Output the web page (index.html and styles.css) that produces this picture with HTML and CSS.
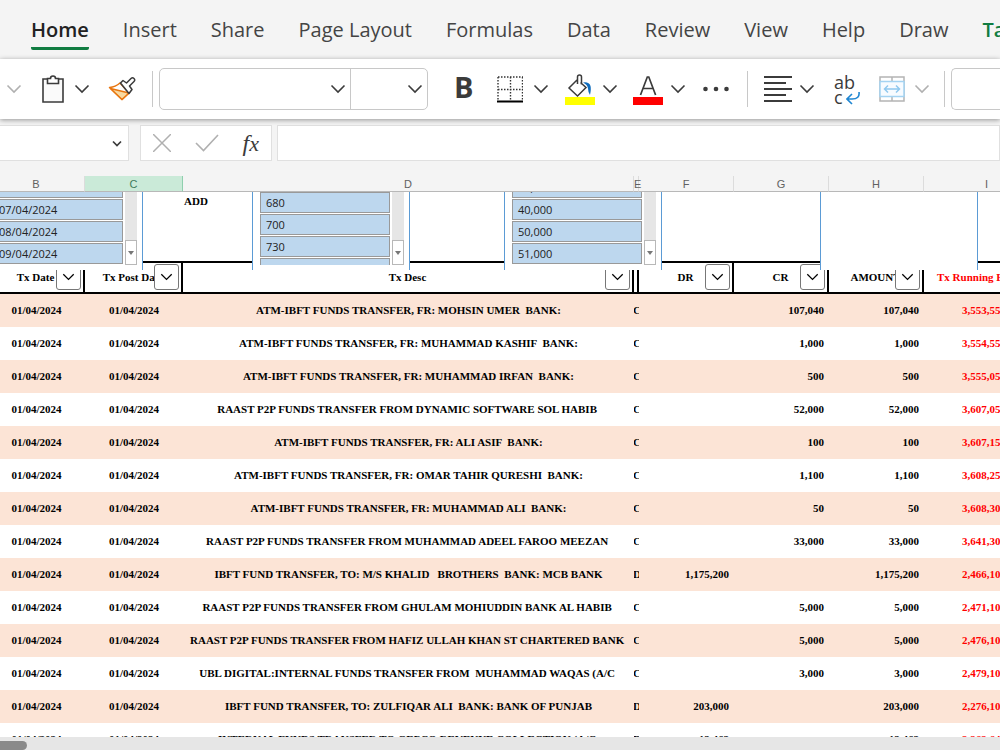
FILE: index.html
```html
<!DOCTYPE html>
<html lang="en">
<head>
    <meta charset="UTF-8">
    <meta name="viewport" content="width=device-width, initial-scale=1.0">
    <title>Bank Statement</title>
    <link rel="stylesheet" href="styles.css">
</head>
<body>
    <svg class="defs" aria-hidden="true">
        <symbol id="chevron" viewBox="0 0 16 10"><path d="M1.5 1.5 8 8l6.500-6.500" fill="none" stroke="currentColor" stroke-width="1.600"/></symbol>
        <symbol id="chevron-small" viewBox="0 0 10 7"><path d="M1 1.500 5 5.500l4-4" fill="none" stroke="currentColor" stroke-width="1.700"/></symbol>
    </svg>

    <nav class="tabs">
        <a href="#" class="active">Home</a>
        <a href="#">Insert</a>
        <a href="#">Share</a>
        <a href="#">Page Layout</a>
        <a href="#">Formulas</a>
        <a href="#">Data</a>
        <a href="#">Review</a>
        <a href="#">View</a>
        <a href="#">Help</a>
        <a href="#">Draw</a>
        <a href="#" class="context">Table</a>
    </nav>

    <div class="toolbar">
        <button class="arrow off" aria-label="Undo options"><svg><use href="#chevron"/></svg></button>
        <button class="paste" aria-label="Paste">
            <svg width="24" height="28" viewBox="0 0 24 28" fill="none" stroke="#3b3b3b" stroke-width="1.6"><path d="M2 4h20v23H2z" fill="#fafafa"/><path d="M6.500 8.500v-5h3a2.500 2.500 0 0 1 5 0h3v5z" fill="#fff"/></svg>
        </button>
        <button class="arrow" aria-label="Paste options"><svg><use href="#chevron"/></svg></button>
        <button class="painter" aria-label="Format Painter">
            <svg width="28" height="26" viewBox="0 0 28 26" fill="none" stroke-width="1.500" stroke-linejoin="round"><path d="M1.500 11.500q6-.5 10.500-4.500l9 10-7 6.500z" fill="#fff" stroke="#e8750e"/><path d="M2.500 12.500 21 17l-7 6.500z" fill="#f8d9a0" stroke="#e8750e"/><path d="M12.500 7 15 4.500l3.500 2.500L23 2.500q1.500-1.500 3 0t0 3L21.500 10l2.500 3.500-3 4z" fill="#fff" stroke="#3b3b3b"/></svg>
        </button>
        <span class="rule"></span>
        <div class="fontbox">
            <button class="name" aria-label="Font name"><svg><use href="#chevron"/></svg></button>
            <button class="size" aria-label="Font size"><svg><use href="#chevron"/></svg></button>
        </div>
        <button class="bold">B</button>
        <button class="borders" aria-label="Borders">
            <svg width="26" height="27" viewBox="0 0 26 27" fill="none" stroke="#333"><path d="M1 1h25M1 13.500h25M1 1v23M13.500 1v23M25.500 1v23" stroke-width="1.400" stroke-dasharray="1.500 1.500"/><path d="M0 25.500h26" stroke="#000" stroke-width="2"/></svg>
        </button>
        <button class="arrow" aria-label="Border options"><svg><use href="#chevron"/></svg></button>
        <button class="fill" aria-label="Fill Color">
            <svg width="30" height="31" viewBox="0 0 30 31" fill="none"><path d="M12 6 4 14l8.500 8L21 13.500 15.500 8.500M12.500 10V3q0-2 2-2t2 2v7.500" stroke="#3b3b3b" stroke-width="1.500"/><path d="M18 8.500q6-1 7.500 3.500.8 3-.5 9-2-3-2-6.500-.5-4-5-6z" fill="#0f6cbd"/><path d="M0 23h30v8H0z" fill="#ff0"/></svg>
        </button>
        <button class="arrow" aria-label="Fill options"><svg><use href="#chevron"/></svg></button>
        <button class="color" aria-label="Font Color">
            <svg width="30" height="31" viewBox="0 0 30 31" fill="none"><path d="M7.500 21 14.300 3h1.500l6.800 18M10 14.500h10" stroke="#3b3b3b" stroke-width="1.700"/><path d="M0 23h30v8H0z" fill="#f00"/></svg>
        </button>
        <button class="arrow" aria-label="Font color options"><svg><use href="#chevron"/></svg></button>
        <button class="more" aria-label="More font options">
            <svg width="26" height="6" viewBox="0 0 26 6" fill="#3b3b3b"><circle cx="2.500" cy="3" r="2.300"/><circle cx="13" cy="3" r="2.300"/><circle cx="23.500" cy="3" r="2.300"/></svg>
        </button>
        <span class="rule"></span>
        <button class="align" aria-label="Align Left">
            <svg width="28" height="26" viewBox="0 0 28 26" stroke="#3b3b3b" stroke-width="1.800"><path d="M0 1h28M0 7h22M0 13h28M0 19h22M0 25h28"/></svg>
        </button>
        <button class="arrow" aria-label="Align options"><svg><use href="#chevron"/></svg></button>
        <button class="wrap" aria-label="Wrap Text">
            <span>ab<br>c</span>
            <svg width="14" height="13" viewBox="0 0 14 13" fill="none" stroke="#1f86d2" stroke-width="1.600"><path d="M13 0q1 7-7 7H1M6 2 1 7l5 5"/></svg>
        </button>
        <button class="merge" aria-label="Merge and Center">
            <svg width="26" height="26" viewBox="0 0 26 26" fill="none" stroke-width="1.500"><path d="M1 1h24v24H1zM13 1v4M13 21v4" stroke="#b4b4b4"/><path d="M1 5.500h24v15H1z" fill="#f7fbff" stroke="#a4d3f2"/><path d="M5.500 13h15M9 9.500 5.500 13 9 16.500M17 9.500l3.500 3.500-3.500 3.500" stroke="#8fc8ef"/></svg>
        </button>
        <button class="arrow off" aria-label="Merge options"><svg><use href="#chevron"/></svg></button>
        <span class="rule"></span>
        <button class="format" aria-label="Number format"></button>
    </div>

    <div class="formula-bar">
        <button class="namebox" aria-label="Name box"><svg><use href="#chevron-small"/></svg></button>
        <div class="entry">
            <button aria-label="Cancel"><svg width="18" height="18" viewBox="0 0 18 18" stroke="#b0b0b0" stroke-width="1.500"><path d="M0 0l18 18M18 0 0 18"/></svg></button>
            <button aria-label="Enter"><svg width="24" height="18" viewBox="0 0 24 18" fill="none" stroke="#b0b0b0" stroke-width="1.600"><path d="M1 9l7.500 7.500L23 1"/></svg></button>
            <button class="fx" aria-label="Insert Function">f<small>x</small></button>
        </div>
        <input type="text" aria-label="Formula">
    </div>

    <main class="sheet">
        <table>
            <colgroup>
                <col class="b"><col class="c"><col class="d"><col class="e"><col class="f"><col class="g"><col class="h"><col class="i">
            </colgroup>
            <thead>
                <tr class="letters">
                    <th>B</th><th class="selected">C</th><th>D</th><th>E</th><th>F</th><th>G</th><th>H</th><th>I</th>
                </tr>
                <tr class="top">
                    <td></td><td></td><td>ADD</td><td></td><td></td><td></td><td></td><td></td>
                </tr>
                <tr class="titles">
                    <th>Tx Date<button aria-label="Filter Tx Date"><svg><use href="#chevron"/></svg></button></th>
                    <th>Tx Post Date<button aria-label="Filter Tx Post Date"><svg><use href="#chevron"/></svg></button></th>
                    <th>Tx Desc<button aria-label="Filter Tx Desc"><svg><use href="#chevron"/></svg></button></th>
                    <th></th>
                    <th>DR<button aria-label="Filter DR"><svg><use href="#chevron"/></svg></button></th>
                    <th>CR<button aria-label="Filter CR"><svg><use href="#chevron"/></svg></button></th>
                    <th>AMOUNT<button aria-label="Filter AMOUNT"><svg><use href="#chevron"/></svg></button></th>
                    <th>Tx Running Balance</th>
                </tr>
            </thead>
            <tbody>
                <tr><td>01/04/2024</td><td>01/04/2024</td><td>ATM-IBFT FUNDS TRANSFER, FR: MOHSIN UMER  BANK:</td><td>C</td><td></td><td>107,040</td><td>107,040</td><td>3,553,55</td></tr>
                <tr><td>01/04/2024</td><td>01/04/2024</td><td>ATM-IBFT FUNDS TRANSFER, FR: MUHAMMAD KASHIF  BANK:</td><td>C</td><td></td><td>1,000</td><td>1,000</td><td>3,554,55</td></tr>
                <tr><td>01/04/2024</td><td>01/04/2024</td><td>ATM-IBFT FUNDS TRANSFER, FR: MUHAMMAD IRFAN  BANK:</td><td>C</td><td></td><td>500</td><td>500</td><td>3,555,05</td></tr>
                <tr><td>01/04/2024</td><td>01/04/2024</td><td>RAAST P2P FUNDS TRANSFER FROM DYNAMIC SOFTWARE SOL HABIB </td><td>C</td><td></td><td>52,000</td><td>52,000</td><td>3,607,05</td></tr>
                <tr><td>01/04/2024</td><td>01/04/2024</td><td>ATM-IBFT FUNDS TRANSFER, FR: ALI ASIF  BANK:</td><td>C</td><td></td><td>100</td><td>100</td><td>3,607,15</td></tr>
                <tr><td>01/04/2024</td><td>01/04/2024</td><td>ATM-IBFT FUNDS TRANSFER, FR: OMAR TAHIR QURESHI  BANK:</td><td>C</td><td></td><td>1,100</td><td>1,100</td><td>3,608,25</td></tr>
                <tr><td>01/04/2024</td><td>01/04/2024</td><td>ATM-IBFT FUNDS TRANSFER, FR: MUHAMMAD ALI  BANK:</td><td>C</td><td></td><td>50</td><td>50</td><td>3,608,30</td></tr>
                <tr><td>01/04/2024</td><td>01/04/2024</td><td>RAAST P2P FUNDS TRANSFER FROM MUHAMMAD ADEEL FAROO MEEZAN </td><td>C</td><td></td><td>33,000</td><td>33,000</td><td>3,641,30</td></tr>
                <tr><td>01/04/2024</td><td>01/04/2024</td><td>IBFT FUND TRANSFER, TO: M/S KHALID   BROTHERS  BANK: MCB BANK</td><td>D</td><td>1,175,200</td><td></td><td>1,175,200</td><td>2,466,10</td></tr>
                <tr><td>01/04/2024</td><td>01/04/2024</td><td>RAAST P2P FUNDS TRANSFER FROM GHULAM MOHIUDDIN BANK AL HABIB </td><td>C</td><td></td><td>5,000</td><td>5,000</td><td>2,471,10</td></tr>
                <tr><td>01/04/2024</td><td>01/04/2024</td><td>RAAST P2P FUNDS TRANSFER FROM HAFIZ ULLAH KHAN ST CHARTERED BANK </td><td>C</td><td></td><td>5,000</td><td>5,000</td><td>2,476,10</td></tr>
                <tr><td>01/04/2024</td><td>01/04/2024</td><td>UBL DIGITAL:INTERNAL FUNDS TRANSFER FROM  MUHAMMAD WAQAS (A/C </td><td>C</td><td></td><td>3,000</td><td>3,000</td><td>2,479,10</td></tr>
                <tr><td>01/04/2024</td><td>01/04/2024</td><td>IBFT FUND TRANSFER, TO: ZULFIQAR ALI  BANK: BANK OF PUNJAB</td><td>D</td><td>203,000</td><td></td><td>203,000</td><td>2,276,10</td></tr>
                <tr><td>01/04/2024</td><td>01/04/2024</td><td>INTERNAL FUNDS TRANSFER TO GEPCO REVENUE COLLECTION (A/C </td><td>D</td><td>12,462</td><td></td><td>12,462</td><td>2,263,64</td></tr>
            </tbody>
        </table>

        <!-- slicers float over the frozen rows -->
        <div class="slicer dates">
            <div class="items"><button>06/04/2024</button><button>07/04/2024</button><button>08/04/2024</button><button>09/04/2024</button></div>
            <div class="track"><button aria-label="Scroll down"></button></div>
        </div>
        <div class="slicer debit">
            <div class="items"><button>680</button><button>700</button><button>730</button><button></button></div>
            <div class="track"><button aria-label="Scroll down"></button></div>
        </div>
        <div class="slicer credit">
            <div class="items"><button>30,000</button><button>40,000</button><button>50,000</button><button>51,000</button></div>
            <div class="track"><button aria-label="Scroll down"></button></div>
        </div>
        <div class="slicer empty"></div>
    </main>

    <div class="scrollbar"><div class="thumb"></div></div>
</body>
</html>
```
FILE: styles.css
```css
* {
    box-sizing: border-box;
}
body {
    margin: 0;
    height: 100vh;
    display: flex;
    flex-direction: column;
    overflow: hidden;
    background: #f4f4f4;
    color: #3b3b3b;
    font-family: "Open Sans", "Noto Sans", sans-serif;
}
button {
    margin: 0;
    padding: 0;
    border: 0;
    background: none;
    color: inherit;
    font: inherit;
    flex: none;
}
svg {
    display: block;
}
.defs {
    position: absolute;
    width: 0;
    height: 0;
}

/* ribbon tabs */
.tabs {
    display: flex;
    flex: none;
    gap: 34px;
    height: 59px;
    padding: 15px 0 0 31px;
    overflow: hidden;
    font-size: 20px;
    line-height: 30px;
    white-space: nowrap;
}
.tabs a {
    height: 35px;
    color: #444;
    text-decoration: none;
}
.tabs .active {
    color: #222;
    font-weight: 600;
    border-bottom: 3px solid #107c41;
    border-radius: 2px;
}
.tabs .context {
    color: #107c41;
    font-weight: 600;
}

/* toolbar */
.toolbar {
    display: flex;
    flex: none;
    align-items: center;
    height: 60px;
    padding-left: 6px;
    background: #fff;
    box-shadow: 0 1px 5px rgba(0, 0, 0, 0.4);
    position: relative;
    z-index: 2;
}
.toolbar > * {
    flex: none;
}
.arrow svg,
.fontbox svg {
    width: 16px;
    height: 10px;
}
.off {
    color: #b0b0b0;
}
.rule {
    width: 1px;
    height: 36px;
    background: #c8c8c8;
}
.paste {
    margin: 0 9px 0 19px;
}
.painter {
    margin: 0 16px 0 18px;
}
.fontbox {
    display: flex;
    width: 269px;
    height: 42px;
    margin: 0 26px 0 6px;
    border: 1px solid #c8c8c8;
    border-radius: 5px;
}
.fontbox button {
    display: flex;
    align-items: center;
    justify-content: flex-end;
    padding-right: 4px;
}
.fontbox .name {
    flex: 1;
    border-right: 1px solid #c8c8c8;
}
.fontbox .size {
    width: 76px;
}
.bold {
    width: 17px;
    padding-bottom: 4px;
    font-size: 29px;
    line-height: 36px;
    font-weight: 700;
}
.borders {
    margin: 0 10px 0 26px;
}
.fill {
    margin: 0 7px 0 16px;
}
.color {
    margin: 0 7px 0 15px;
}
.more {
    margin: 0 18px 0 17px;
}
.align {
    margin: 0 7px 0 16px;
}
.wrap {
    display: flex;
    align-items: flex-end;
    width: 26px;
    height: 32px;
    margin: 0 19px;
    font-size: 18px;
    line-height: 15px;
    text-align: left;
}
.wrap span {
    width: 12px;
}
.merge {
    margin-right: 9px;
}
.off + .rule {
    margin: 0 6px 0 14px;
}
.toolbar .format {
    flex: 1;
    height: 42px;
    border: 1px solid #c8c8c8;
    border-right: 0;
    border-radius: 5px 0 0 5px;
}

/* formula bar */
.formula-bar {
    display: flex;
    flex: none;
    height: 57px;
    padding-top: 6px;
}
.namebox,
.entry,
.formula-bar input {
    height: 36px;
    background: #fff;
    border: 1px solid #e0e0e0;
}
.namebox {
    display: flex;
    align-items: center;
    justify-content: flex-end;
    width: 129px;
    margin-right: 11px;
    padding-right: 6px;
    border-left: 0;
}
.namebox svg {
    width: 10px;
    height: 7px;
}
.entry {
    display: flex;
    align-items: center;
    justify-content: space-between;
    width: 132px;
    margin-right: 5px;
    padding: 0 12px;
}
.fx {
    font: italic 24px/30px "Liberation Serif", serif;
    -webkit-text-stroke: 0;
}
.fx small {
    font-size: 22px;
}
.formula-bar input {
    flex: 1;
    min-width: 0;
}

/* grid */
.sheet {
    flex: 1;
    min-height: 0;
    overflow: hidden;
    position: relative;
    background: #fff;
}
table {
    width: calc(100% + 12px);
    margin-left: -12px;
    table-layout: fixed;
    border-collapse: separate;
    border-spacing: 0;
    font: bold 11px/16px "Liberation Serif", serif;
    color: #000;
}
.b { width: 97px; }
.c { width: 98px; }
.e { width: 5px; }
.f, .g, .h { width: 95px; }
.i { width: 76px; }
th,
td {
    height: 33px;
    padding: 0 0 2px;
    overflow: hidden;
    text-align: center;
    white-space: pre;
}
.letters {
    background: #f4f4f4;
}
.letters th {
    height: 16px;
    padding: 1px 0 0;
    overflow: visible;
    border-right: 1px solid #dcdcdc;
    border-bottom: 1px solid #b8b8b8;
    color: #616161;
    font: 11px/14px "Liberation Sans", sans-serif;
}
.letters .selected {
    background: #caead8;
    border-right-color: #8fcfae;
    color: #3f7a5b;
}
.letters th:last-child {
    padding-right: 12px;
    text-align: right;
    border-right: 0;
}
.top td {
    height: 69px;
    padding: 1px;
    text-align: left;
    vertical-align: top;
}
.titles th {
    position: relative;
    border: solid #000;
    border-width: 2px 2px 2px 0;
}
.titles button {
    position: absolute;
    top: 1px;
    right: 2px;
    display: flex;
    align-items: center;
    justify-content: center;
    width: 25px;
    height: 26px;
    background: #fff;
    border: 1px solid #777;
    border-radius: 3px;
}
.titles svg {
    width: 13px;
    height: 8px;
}
.titles th:last-child {
    padding-left: 13px;
    text-align: left;
    border-right: 0;
    color: #f00;
}
tbody tr:nth-child(odd) {
    background: #fce4d6;
}
tbody td:nth-child(4) {
    text-align: left;
    text-indent: -1px;
}
tbody td:nth-child(n+5) {
    padding-right: 5px;
    text-align: right;
}
tbody td:last-child {
    padding: 0 0 2px 38px;
    text-align: left;
    color: #f00;
}

/* slicers */
.slicer {
    position: absolute;
    top: 16px;
    display: flex;
    gap: 2px;
    width: 158px;
    height: 78px;
    padding: 0 5px 5px 7px;
    background: #fff;
    border: solid #5b9bd5;
    border-width: 0 1px;
}
.dates { left: -15px; }
.debit { left: 252px; }
.credit { left: 504px; }
.empty { left: 820px; }
.items {
    display: flex;
    flex: 1;
    flex-direction: column;
    gap: 1px;
    overflow: hidden;
}
.items button {
    height: 21px;
    padding-left: 5px;
    background: #bdd7ee;
    border: 1px solid #999;
    color: #222;
    font-size: 11px;
    line-height: 19px;
    text-align: left;
}
.dates .items button:first-child,
.credit .items button:first-child {
    margin-top: -15px;
}
.track {
    display: flex;
    align-items: flex-end;
    width: 12px;
    background: #e6e6e6;
}
.track button {
    display: flex;
    align-items: center;
    justify-content: center;
    width: 12px;
    height: 25px;
    background: #fff;
    border: 1px solid #b8b8b8;
}
.track button::before {
    content: "";
    border: solid transparent;
    border-width: 4px 3px 0;
    border-top-color: #777;
}

.scrollbar {
    flex: none;
    height: 13px;
    padding-top: 4px;
    background: #e6e6e6;
}
.thumb {
    width: 27px;
    height: 9px;
    background: #8a8a8a;
    border-radius: 0 5px 5px 0;
}
```
